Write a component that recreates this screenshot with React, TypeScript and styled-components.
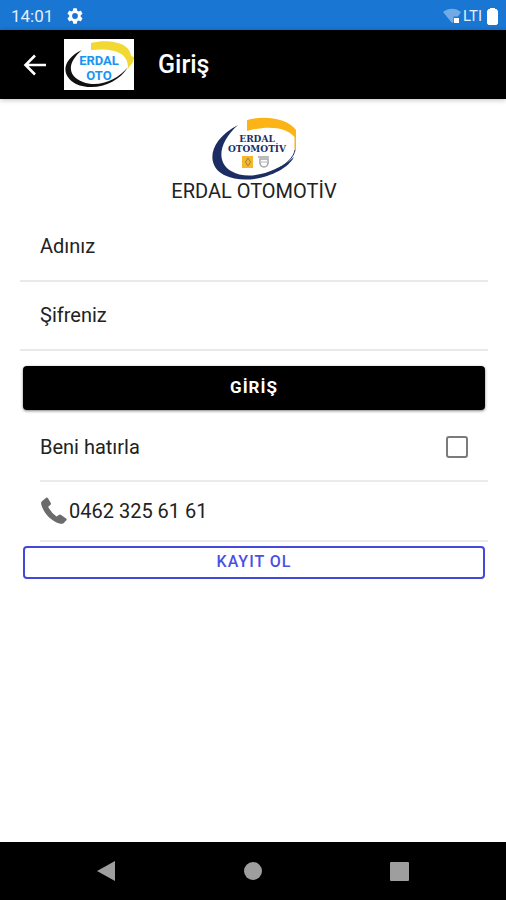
import React from "react";
import styled, { createGlobalStyle } from "styled-components";

const GlobalStyle = createGlobalStyle`
  *, *::before, *::after { box-sizing: border-box; }
  body { margin: 0; background: #fff; }
  body, button, input { font-family: Roboto, "Liberation Sans", sans-serif; }
  button { margin: 0; cursor: pointer; }
`;

const Screen = styled.div`
  display: flex;
  flex-direction: column;
  min-height: 100vh;
  color: #222;
  font-size: 20px;
`;

const StatusBar = styled.div`
  display: flex;
  align-items: center;
  justify-content: space-between;
  height: 30px;
  padding: 1px 8px 0 11px;
  background: #1976d2;
  color: #fff;
`;

const StatusGroup = styled.div<{ $gap: number }>`
  display: flex;
  align-items: center;
  gap: ${(p) => p.$gap}px;
`;

const Clock = styled.time`
  font-size: 17px;
  line-height: 24px;
  color: #e3eefa;
`;

const Network = styled.span`
  font-size: 15px;
  line-height: 24px;
  color: #e3eefa;
`;

const Header = styled.header`
  display: flex;
  align-items: center;
  height: 69px;
  padding: 0 21px;
  background: #000;
  color: #fff;
  box-shadow: 0 1px 5px rgba(0, 0, 0, 0.25);
`;

const BackButton = styled.button`
  display: flex;
  padding: 0;
  border: 0;
  background: none;
  color: inherit;
`;

const HeaderLogo = styled.svg`
  margin-left: 15px;
  background: #fff;
`;

const Title = styled.h1`
  margin: 0 0 0 24px;
  font-size: 25px;
  line-height: 32px;
  font-weight: 500;
`;

const Content = styled.main`
  flex: 1;
  padding: 18px 18px 0 20px;
`;

const Brand = styled.div`
  display: flex;
  flex-direction: column;
  align-items: center;
  font-size: 20px;
  line-height: 22px;
`;

const Field = styled.input`
  display: block;
  width: 100%;
  height: 69px;
  padding: 0 20px 2px;
  border: 0;
  border-bottom: 2px solid #e9e9e9;
  border-radius: 0;
  background: none;
  color: #222;
  font-size: 20px;
  outline: none;
  &::placeholder { color: #222; opacity: 1; }
`;

const Fields = styled.div`
  padding-top: 11px;
`;

const Button = styled.button<{ $outline?: boolean }>`
  display: block;
  width: calc(100% - 6px);
  height: ${(p) => (p.$outline ? 33 : 44)}px;
  margin: ${(p) => (p.$outline ? "4px 3px 0" : "15px 3px 0")};
  padding: 0 0 2px;
  border: ${(p) => (p.$outline ? "2px solid #4347dc" : "0")};
  border-radius: 4px;
  background: ${(p) => (p.$outline ? "#fff" : "#000")};
  color: ${(p) => (p.$outline ? "#4a50e4" : "#fff")};
  box-shadow: ${(p) => (p.$outline ? "none" : "0 1px 3px rgba(0, 0, 0, 0.5)")};
  font-size: ${(p) => (p.$outline ? 16 : 17)}px;
  font-weight: ${(p) => (p.$outline ? 500 : 700)};
  letter-spacing: 1px;
`;

const Row = styled.div<{ $height: number }>`
  display: flex;
  align-items: center;
  justify-content: space-between;
  height: ${(p) => p.$height}px;
  margin-left: 20px;
  padding-right: 20px;
  border-bottom: 2px solid #ebebeb;
`;

const Remember = styled(Row)`
  padding-top: 4px;
`;

const Checkbox = styled.input`
  appearance: none;
  width: 22px;
  height: 22px;
  margin: 0;
  border: 2px solid #7b7b7b;
  border-radius: 3px;
  background: #fff;
  &:checked { background: #7b7b7b; box-shadow: inset 0 0 0 3px #fff; }
`;

const PhoneLink = styled.a`
  display: flex;
  align-items: center;
  gap: 1px;
  color: inherit;
  text-decoration: none;
`;

const NavBar = styled.nav`
  display: grid;
  grid-template-columns: repeat(3, 1fr);
  height: 58px;
  padding: 0 33px;
  background: #000;
`;

const NavButton = styled.button`
  display: flex;
  align-items: center;
  justify-content: center;
  padding: 0;
  border: 0;
  background: none;
  color: #9e9e9e;
`;

const GearIcon = () => (
  <svg width="16" height="16" viewBox="2 2 20 20" fill="#fff" aria-hidden="true">
    <path d="M19.14 12.94c.04-.3.06-.61.06-.94s-.02-.64-.07-.94l2.03-1.58a.49.49 0 0 0 .12-.61l-1.92-3.32a.49.49 0 0 0-.59-.22l-2.39.96a7 7 0 0 0-1.62-.94l-.36-2.54a.48.48 0 0 0-.48-.41h-3.84a.48.48 0 0 0-.47.41l-.36 2.54c-.59.24-1.13.57-1.62.94l-2.39-.96a.49.49 0 0 0-.59.22L2.74 8.87a.48.48 0 0 0 .12.61l2.03 1.58c-.05.3-.09.63-.09.94s.02.64.07.94l-2.03 1.58a.49.49 0 0 0-.12.61l1.92 3.32c.12.22.37.29.59.22l2.39-.96c.5.38 1.03.7 1.62.94l.36 2.54c.05.24.24.41.48.41h3.84c.24 0 .44-.17.47-.41l.36-2.54c.59-.24 1.13-.56 1.62-.94l2.39.96c.22.08.47 0 .59-.22l1.92-3.32a.48.48 0 0 0-.12-.61zM12 15.6a3.6 3.6 0 1 1 0-7.2 3.6 3.6 0 0 1 0 7.2z" />
  </svg>
);

const WifiIcon = () => (
  <svg width="18" height="16" viewBox="0 0 18 16" aria-hidden="true">
    <path d="M0 4C5-.5 13-.5 18 4l-3 4.500h-4.500V14L9 15z" fill="#70abe5" />
    <rect x="11" y="10" width="5" height="5" fill="#fff" />
  </svg>
);

const BatteryIcon = () => (
  <svg width="11" height="18" viewBox="0 0 11 18" fill="#fff" aria-hidden="true">
    <path d="M3 2V1h5v1h1.500L11 4v12.500L9.500 18h-8L0 16.500V4l1.500-2z" />
  </svg>
);

const BackArrow = () => (
  <svg width="28" height="28" viewBox="0 0 28 28" fill="none" stroke="#fff" strokeWidth="2.600" aria-hidden="true">
    <path d="M25 14H5M14 4.500L4.500 14L14 23.500" />
  </svg>
);

const PhoneIcon = () => (
  <svg width="28" height="28" viewBox="0 0 28 28" fill="#6b6b6b" aria-hidden="true">
    <path d="M2.200 4L6.200.8Q7.200.2 8 1.200L10.800 6q.5 1-.3 1.800L8.200 9.700q2.800 6 8.300 9.700l2.700-1.600q1-.6 1.900.1l5 3.600q1 .8.300 1.800L23.800 26q-1.600 1.400-4.400.5C10.500 23.700 3.800 16 1.400 8 .8 5.600 1.300 4.800 2.200 4z" />
  </svg>
);

const ErdalOtoLogo = () => (
  <HeaderLogo width="70" height="51" viewBox="0 0 70 51" role="img" aria-label="Erdal Oto">
    <path d="M27 4C44-.5 66 3 67 17l3 1c0 6-4 8-6 12 1-18-17-21-37-19z" fill="#f2d832" />
    <path d="M18 11C-3 21-3 37 12 45c18 8 42 0 52-17-10 13-30 21-45 15C2 36 4 23 18 11z" fill="#111" />
    <g fill="#1894f0" fontFamily="Roboto, sans-serif" fontSize="13" fontWeight="700" textAnchor="middle">
      <text x="35" y="26">ERDAL</text>
      <text x="35" y="41">OTO</text>
    </g>
  </HeaderLogo>
);

const ErdalOtomotivLogo = () => (
  <svg width="86" height="63" viewBox="0 0 86 63" role="img" aria-label="Erdal Otomotiv">
    <path d="M36 3C52-2 77 1 85 13v20h-1.500V20C76 10 56 8 36 14z" fill="#fbb315" />
    <path d="M27 8C-2 23-6 48 13 58c25 12 62-2 70-18C68 54 38 65 20 54 4 44 9 24 27 8z" fill="#1c2d63" />
    <path d="M84 33c-1 7-9 15-20 20" fill="none" stroke="#1c2d63" />
    <g fill="#1c2d63" fontFamily="'DejaVu Serif', serif" fontWeight="700" textAnchor="middle">
      <text x="46" y="25" fontSize="9">ERDAL</text>
      <text x="46" y="35" fontSize="9">OTOMOTİV</text>
    </g>
    <rect x="31" y="39" width="11" height="12" fill="#f3b82c" />
    <path d="M37 41l-2.500 4 2.500 4 2.500-4z" fill="none" stroke="#9b8048" />
    <path d="M47 40h11M49 42q-1 8 4 8t4-8z" fill="#fff" stroke="#a6a6a6" strokeWidth="1.500" />
    <path d="M50 45h6" stroke="#b5b5b5" />
  </svg>
);

export default function App() {
  return (
    <>
      <GlobalStyle />
      <Screen lang="tr">
        <StatusBar>
          <StatusGroup $gap={14}>
            <Clock>14:01</Clock>
            <GearIcon />
          </StatusGroup>
          <StatusGroup $gap={2}>
            <WifiIcon />
            <StatusGroup $gap={5}>
              <Network>LTI</Network>
              <BatteryIcon />
            </StatusGroup>
          </StatusGroup>
        </StatusBar>
        <Header>
          <BackButton type="button" aria-label="Geri">
            <BackArrow />
          </BackButton>
          <ErdalOtoLogo />
          <Title>Giriş</Title>
        </Header>
        <Content>
          <Brand>
            <ErdalOtomotivLogo />
            <span>ERDAL OTOMOTİV</span>
          </Brand>
          <form onSubmit={(e) => e.preventDefault()}>
            <Fields>
              <Field type="text" aria-label="Adınız" placeholder="Adınız" />
              <Field type="password" aria-label="Şifreniz" placeholder="Şifreniz" />
            </Fields>
            <Button type="submit">GİRİŞ</Button>
            <Remember $height={72}>
              <label htmlFor="remember">Beni hatırla</label>
              <Checkbox id="remember" type="checkbox" />
            </Remember>
          </form>
          <Row $height={60}>
            <PhoneLink href="tel:04623256161">
              <PhoneIcon />
              0462 325 61 61
            </PhoneLink>
          </Row>
          <Button type="button" $outline>
            KAYIT OL
          </Button>
        </Content>
        <NavBar>
          <NavButton type="button" aria-label="Geri">
            <svg width="18" height="20" viewBox="0 0 18 20" fill="currentColor">
              <path d="M0 10L18 0v20z" />
            </svg>
          </NavButton>
          <NavButton type="button" aria-label="Ana ekran">
            <svg width="18" height="18" viewBox="0 0 18 18" fill="currentColor">
              <circle cx="9" cy="9" r="9" />
            </svg>
          </NavButton>
          <NavButton type="button" aria-label="Son uygulamalar">
            <svg width="19" height="19" viewBox="0 0 19 19" fill="currentColor">
              <rect width="19" height="19" rx="1" />
            </svg>
          </NavButton>
        </NavBar>
      </Screen>
    </>
  );
}
